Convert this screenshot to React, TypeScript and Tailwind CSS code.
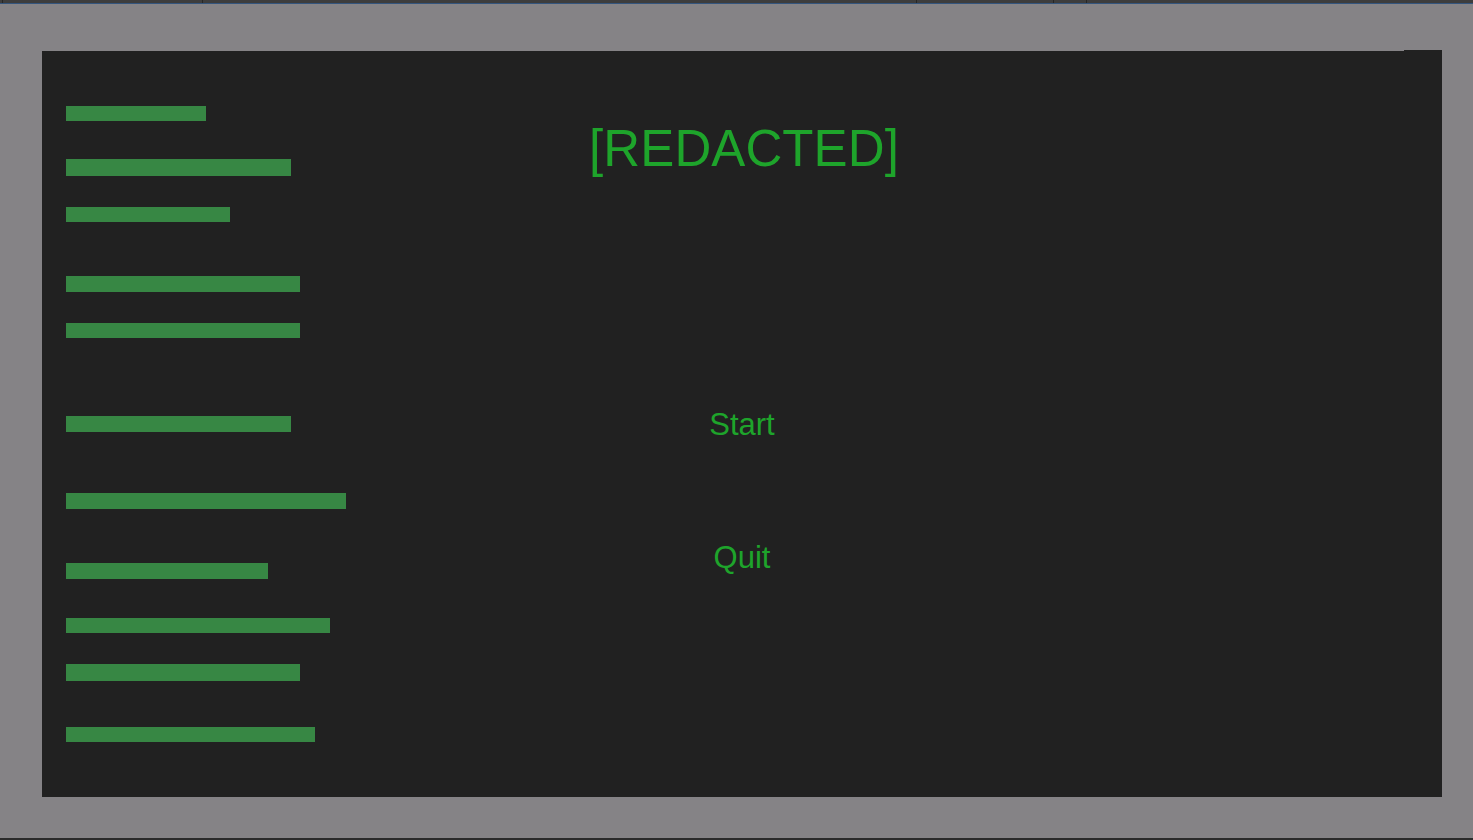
import React from "react";

const bars: { w: string; h: string; mt: string }[] = [
  { w: "w-[140px]", h: "h-[15px]", mt: "mt-[55px]" },
  { w: "w-[225px]", h: "h-[17px]", mt: "mt-[38px]" },
  { w: "w-[164px]", h: "h-[15px]", mt: "mt-[31px]" },
  { w: "w-[234px]", h: "h-[16px]", mt: "mt-[54px]" },
  { w: "w-[234px]", h: "h-[15px]", mt: "mt-[31px]" },
  { w: "w-[225px]", h: "h-[16px]", mt: "mt-[78px]" },
  { w: "w-[280px]", h: "h-[16px]", mt: "mt-[61px]" },
  { w: "w-[202px]", h: "h-[16px]", mt: "mt-[54px]" },
  { w: "w-[264px]", h: "h-[15px]", mt: "mt-[39px]" },
  { w: "w-[234px]", h: "h-[17px]", mt: "mt-[31px]" },
  { w: "w-[249px]", h: "h-[15px]", mt: "mt-[46px]" },
];

export default function App() {
  return (
    <div
      className="w-[1473px] h-[840px] flex flex-col bg-[#858386] overflow-hidden"
      style={{ fontFamily: '"Liberation Sans", Arial, sans-serif' }}
    >
      {/* top strip */}
      <div className="h-[3px] flex bg-[#3d3d3d]">
        <div className="w-[2px]" />
        <div className="w-px bg-[#262626]" />
        <div className="w-[199px]" />
        <div className="w-px bg-[#262626]" />
        <div className="w-[713px]" />
        <div className="w-px bg-[#262626]" />
        <div className="w-[136px]" />
        <div className="w-px bg-[#262626]" />
        <div className="w-[32px]" />
        <div className="w-px bg-[#262626]" />
      </div>
      <div className="h-px bg-[#34557d]" />

      {/* gray area */}
      <div className="flex-1 flex flex-col pl-[42px] pt-[46px]">
        <div className="flex h-px">
          <div className="w-[1362px]" />
          <div className="w-[38px] bg-[#212121]" />
        </div>
        <div className="w-[1400px] h-[746px] bg-[#212121] grid">
          <div className="col-start-1 row-start-1 flex flex-col pl-[24px]">
            {bars.map((b, i) => (
              <div key={i} className={`${b.w} ${b.h} ${b.mt} bg-[#378744]`} />
            ))}
          </div>
          <div className="col-start-1 row-start-1 flex flex-col items-center pt-[72px] text-[#1ea42b]">
            <div className="text-[51px] leading-none h-[51px] ml-[4px] tracking-[0.1px]">[REDACTED]</div>
            <div className="text-[31px] leading-none h-[31px] mt-[235px]">Start</div>
            <div className="text-[31px] leading-none h-[31px] mt-[102px]">Quit</div>
          </div>
        </div>
      </div>
      <div className="h-[2px] bg-[#2b2b2b]" />
    </div>
  );
}
